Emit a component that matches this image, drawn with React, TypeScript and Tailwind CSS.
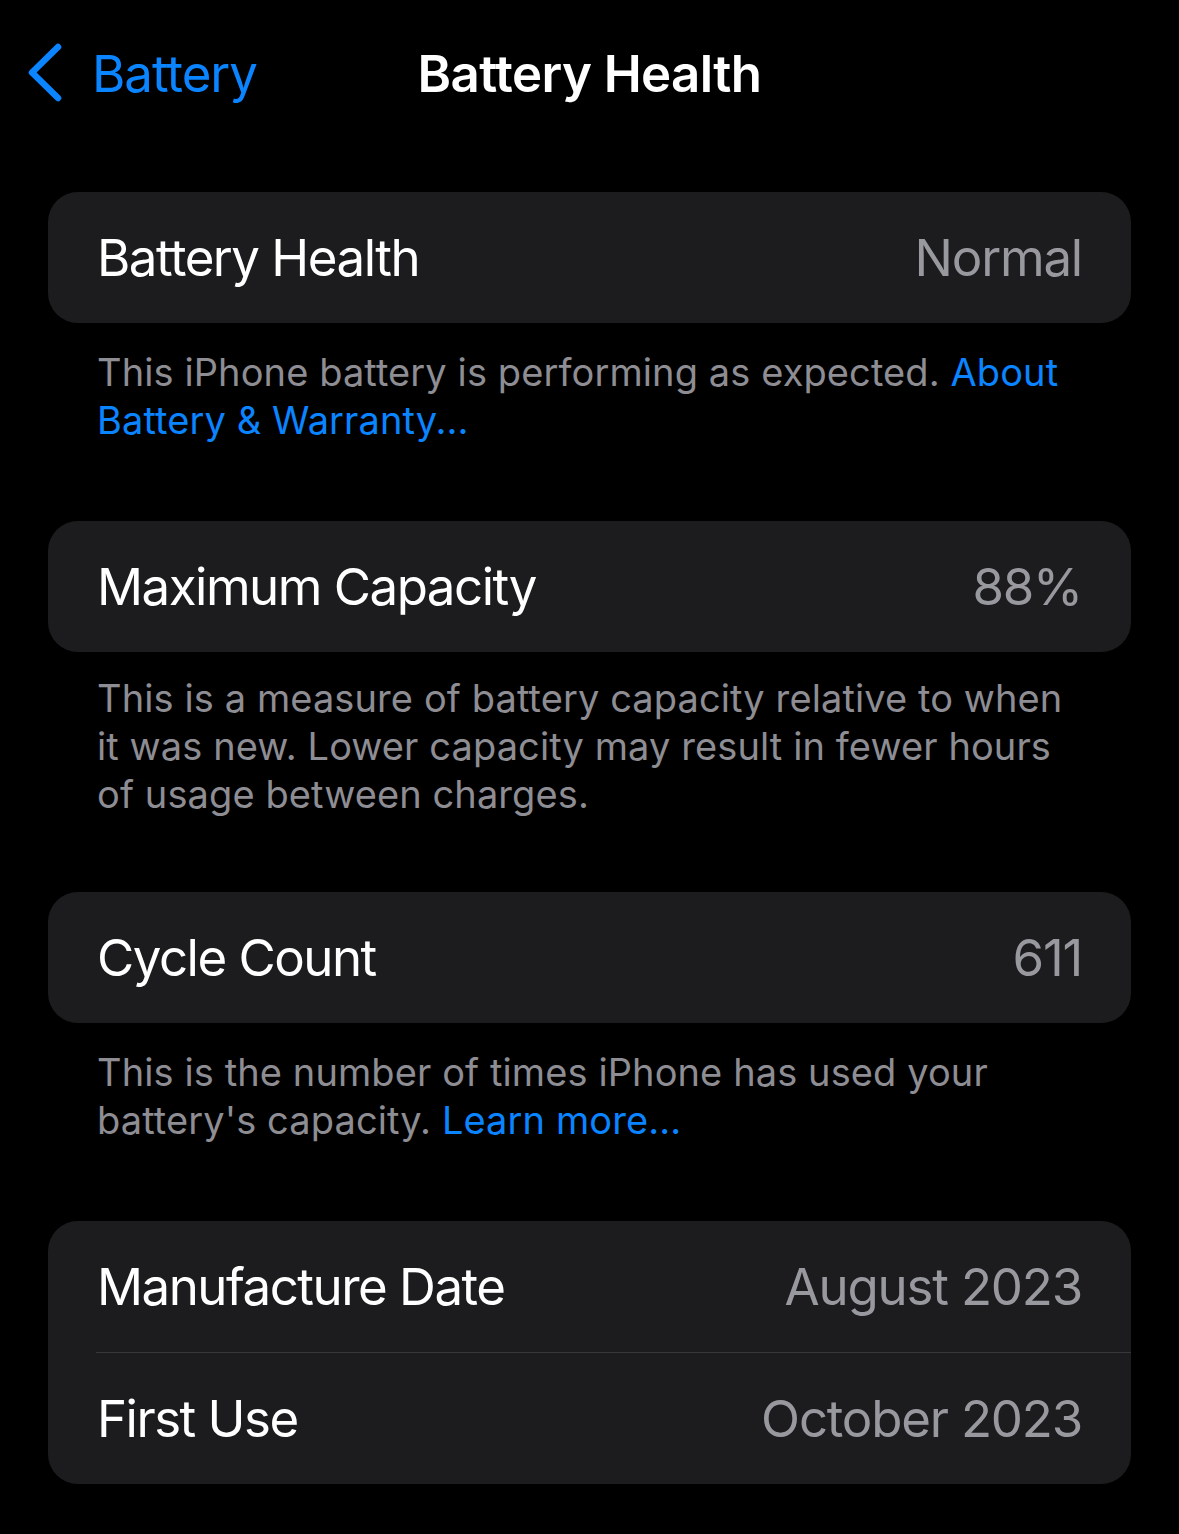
const font = { fontFamily: 'Inter, "Noto Sans", sans-serif' };

type RowProps = { label: string; value: string };

const Row = ({ label, value }: RowProps) => (
  <div className="flex h-[131px] items-center justify-between pl-[49px] pr-[49px]">
    <span className="text-[51px] leading-none tracking-[-1.5px] text-white">{label}</span>
    <span className="text-[51px] leading-none tracking-[-1.2px] text-[#98989f]">{value}</span>
  </div>
);

type FooterProps = { children: React.ReactNode; tight?: boolean };

const Footer = ({ children, tight }: FooterProps) => (
  <p
    className={
      tight
        ? "px-[49px] pt-[22px] pb-[74px] text-[38px] leading-[48px] tracking-[0.1px] text-[#8d8d93]"
        : "px-[49px] pt-[25px] pb-[77px] text-[38px] leading-[48px] tracking-[0.1px] text-[#8d8d93]"
    }
  >
    {children}
  </p>
);

const Link = ({ children }: { children: React.ReactNode }) => (
  <span className="text-[#0a84ff]">{children}</span>
);

export default function App() {
  return (
    <div className="min-h-[1534px] w-[1179px] bg-black antialiased" style={font}>
      <header className="relative flex h-[146px] items-center">
        <button type="button" className="flex items-center pl-[25px] text-[#0a84ff]">
          <svg width="38" height="60" viewBox="0 0 38 60" fill="none" className="mr-[29px]">
            <path
              d="M33 4 L7 29.5 L33 55"
              stroke="currentColor"
              strokeWidth="6.5"
              strokeLinecap="round"
              strokeLinejoin="round"
            />
          </svg>
          <span className="text-[51px] leading-none tracking-[-1px]">Battery</span>
        </button>
        <h1 className="absolute left-1/2 -translate-x-1/2 text-[51px] font-semibold leading-none tracking-[-0.6px] text-white">
          Battery Health
        </h1>
      </header>

      <main className="mt-[46px] px-[48px]">
        <div className="overflow-hidden rounded-[30px] bg-[#1c1c1e]">
          <Row label="Battery Health" value="Normal" />
        </div>
        <Footer>
          This iPhone battery is performing as expected. <Link>About Battery &amp; Warranty...</Link>
        </Footer>

        <div className="overflow-hidden rounded-[30px] bg-[#1c1c1e]">
          <Row label="Maximum Capacity" value="88%" />
        </div>
        <Footer tight>
          This is a measure of battery capacity relative to when it was new. Lower capacity may result in
          fewer hours of usage between charges.
        </Footer>

        <div className="overflow-hidden rounded-[30px] bg-[#1c1c1e]">
          <Row label="Cycle Count" value="611" />
        </div>
        <Footer>
          This is the number of times iPhone has used your battery's capacity. <Link>Learn more...</Link>
        </Footer>

        <div className="overflow-hidden rounded-[30px] bg-[#1c1c1e]">
          <Row label="Manufacture Date" value="August 2023" />
          <div className="ml-[48px] h-px bg-[#38383a]" />
          <Row label="First Use" value="October 2023" />
        </div>
      </main>
    </div>
  );
}
